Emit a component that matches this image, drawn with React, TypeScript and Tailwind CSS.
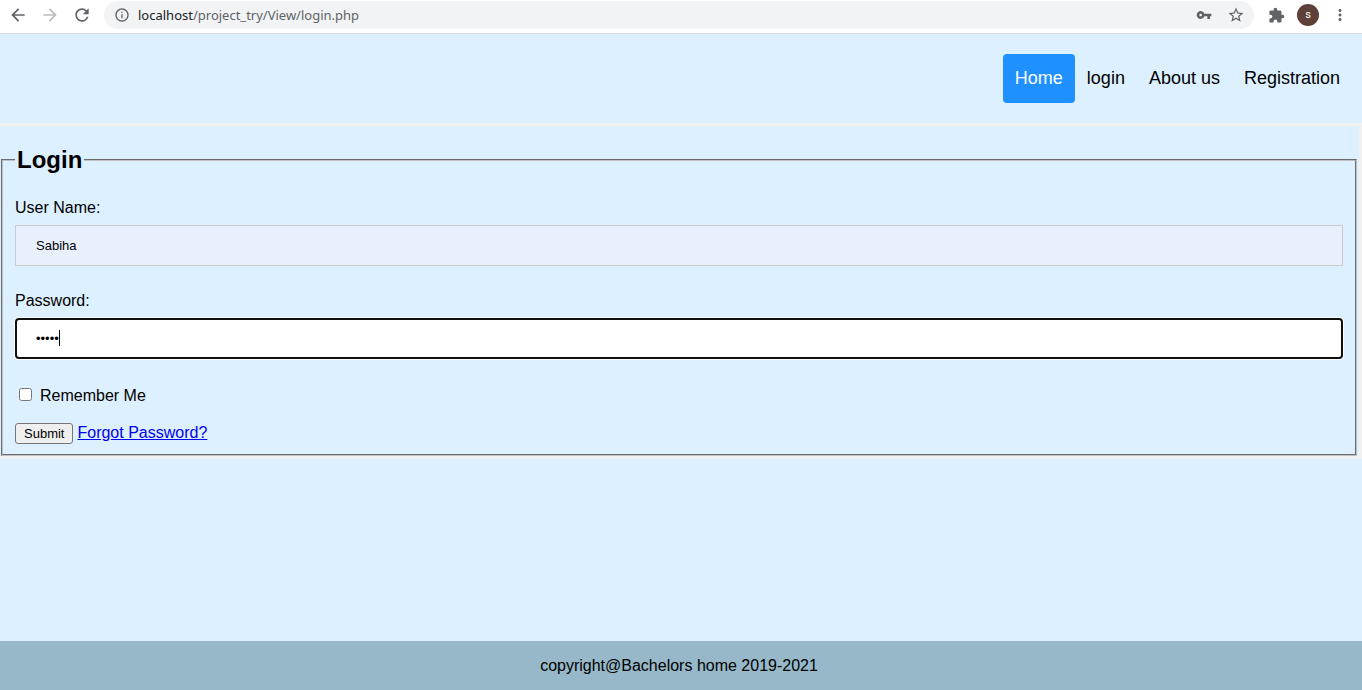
import React from "react";
import {
  MdArrowBack,
  MdArrowForward,
  MdExtension,
  MdInfoOutline,
  MdMoreVert,
  MdRefresh,
  MdStarBorder,
  MdVpnKey,
} from "react-icons/md";

function Toolbar() {
  return (
    <div className="flex h-[34px] items-center border-b border-[#d5d9dd] bg-white pb-[3px] text-[#5f6368]">
      <div className="flex items-center gap-3 pl-2">
        <button type="button" aria-label="Back">
          <MdArrowBack size={20} />
        </button>
        <button type="button" aria-label="Forward" className="text-[#babcbe]">
          <MdArrowForward size={20} />
        </button>
        <button type="button" aria-label="Reload">
          <MdRefresh size={20} />
        </button>
      </div>
      <div className="ml-3 flex h-7 flex-1 items-center rounded-full bg-[#f1f3f4] pr-[9px] pl-[10px]">
        <MdInfoOutline size={16} />
        <span className="ml-2 flex-1 font-['Noto_Sans',sans-serif] text-[13px] leading-4">
          <span className="text-[#202124]">localhost</span>/project_try/View/login.php
        </span>
        <button type="button" aria-label="Saved passwords" className="mr-[15px]">
          <MdVpnKey size={16} />
        </button>
        <button type="button" aria-label="Bookmark this page">
          <MdStarBorder size={18} />
        </button>
      </div>
      <div className="flex items-center gap-3 pr-[13px] pl-[14px]">
        <button type="button" aria-label="Extensions">
          <MdExtension size={17} />
        </button>
        <button
          type="button"
          className="size-[22px] rounded-full bg-[#5d4037] text-center font-['Roboto',sans-serif] text-[11px] leading-[22px] text-white"
        >
          s
        </button>
        <button type="button" aria-label="Menu">
          <MdMoreVert size={18} />
        </button>
      </div>
    </div>
  );
}

const links = ["login", "About us", "Registration"];

function Header() {
  return (
    <header className="flex justify-end px-[10px] py-5">
      <nav className="flex text-[18px] leading-[25px]">
        <a href="#home" className="rounded bg-[#1e90ff] p-3 text-white">
          Home
        </a>
        {links.map((label) => (
          <a key={label} href={"#" + label} className="p-3">
            {label}
          </a>
        ))}
      </nav>
    </header>
  );
}

function LoginForm() {
  return (
    <form
      className="border-y-[3px] border-r-[3px] border-[#f1f1f1]"
      onSubmit={(event) => event.preventDefault()}
    >
      <fieldset className="mr-0.5 ml-px border-2 border-[#c0c0c0] px-3 pt-[5px] pb-[10px] [border-style:groove]">
        <legend className="px-0.5">
          <h2 className="my-5 text-2xl leading-7 font-bold">Login</h2>
        </legend>
        <label htmlFor="username" className="block leading-[18px]">
          User Name:
        </label>
        <input
          id="username"
          type="text"
          defaultValue="Sabiha"
          className="my-2 block h-[41px] w-full border border-[#cccccc] bg-[#e8f0fe] px-5 text-[13px] outline-none"
        />
        <label htmlFor="password" className="mt-[26px] block leading-[18px]">
          Password:
        </label>
        <div className="relative my-2">
          <input
            id="password"
            type="password"
            defaultValue="12345"
            autoFocus
            className="block h-[41px] w-full rounded-[4px] border-2 border-[#101010] bg-white px-[19px] text-[13px] caret-transparent ring-1 ring-white outline-none"
          />
          <span aria-hidden="true" className="absolute top-3 left-11 h-4 w-px bg-black" />
        </div>
        <div className="mt-7 flex items-start leading-[18px]">
          <input id="remember" type="checkbox" className="mt-px mr-2 ml-1 size-[13px]" />
          <label htmlFor="remember">Remember Me</label>
        </div>
        <div className="mt-[18px] flex items-start gap-1 leading-5">
          <button
            type="submit"
            className="h-[21px] rounded-[3px] border border-[#767676] bg-[#efefef] px-2 text-[13px] leading-[19px]"
          >
            Submit
          </button>
          <a href="#forgot" className="text-[#0000ee] underline">
            Forgot Password?
          </a>
        </div>
      </fieldset>
    </form>
  );
}

export default function App() {
  return (
    <div className="flex min-h-screen flex-col bg-[#ddf0ff] font-['Liberation_Sans',Arial,sans-serif] text-base text-black">
      <Toolbar />
      <Header />
      <main className="flex-1">
        <LoginForm />
      </main>
      <footer className="bg-[#96b8c8] pt-4 pr-1 pb-[15px] text-center leading-[18px]">
        copyright@Bachelors home 2019-2021
      </footer>
    </div>
  );
}
